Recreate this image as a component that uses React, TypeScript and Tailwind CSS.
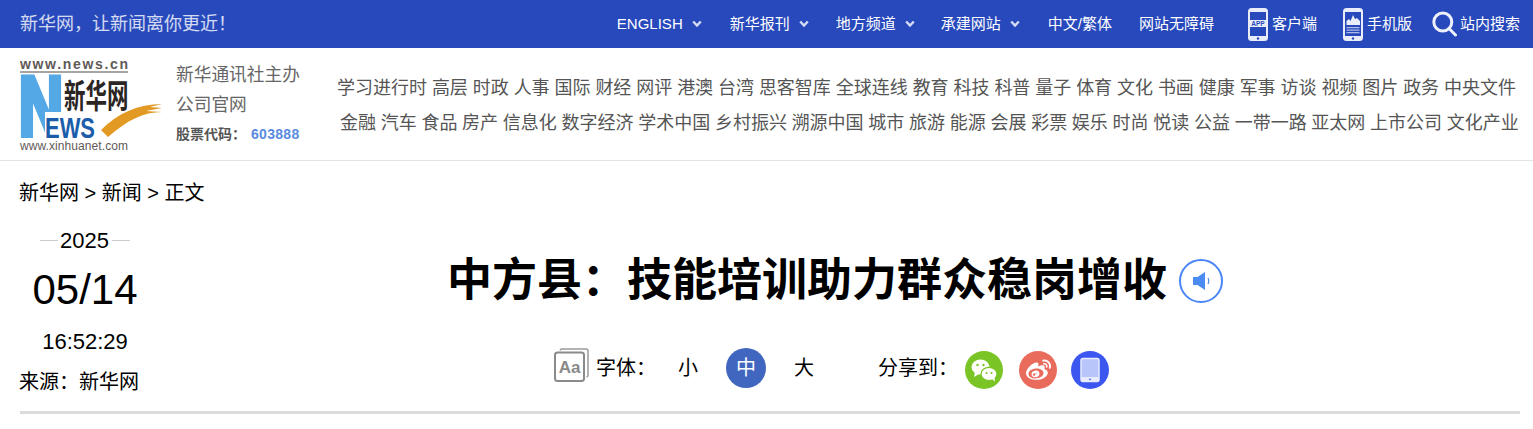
import { FaWeibo } from "react-icons/fa";

const font = "font-['Liberation_Sans','Noto_Sans_CJK_SC',sans-serif]";

const COLON = "\uFF1A";
const COMMA = "\uFF0C";
const BANG = "\uFF01";

const row1 = ["学习进行时", "高层", "时政", "人事", "国际", "财经", "网评", "港澳", "台湾", "思客智库", "全球连线", "教育", "科技", "科普", "量子", "体育", "文化", "书画", "健康", "军事", "访谈", "视频", "图片", "政务", "中央文件"];
const row2 = ["金融", "汽车", "食品", "房产", "信息化", "数字经济", "学术中国", "乡村振兴", "溯源中国", "城市", "旅游", "能源", "会展", "彩票", "娱乐", "时尚", "悦读", "公益", "一带一路", "亚太网", "上市公司", "文化产业"];

function Chevron() {
  return (
    <svg width="10" height="8" viewBox="0 0 10 8" className="ml-[9px]">
      <path d="M1.2 1.5 5 5.6l3.8-4.1" fill="none" stroke="#d5dcf4" strokeWidth="2.4" />
    </svg>
  );
}

function Phone({ children }: { children: React.ReactNode }) {
  return (
    <svg width="20" height="33" viewBox="0 0 20 33">
      <rect x="0" y="0" width="20" height="33" rx="3.5" fill="#e9edf9" />
      <rect x="2" y="4" width="16" height="24" fill="#2749bc" />
      <circle cx="10" cy="30.5" r="1.2" fill="#2749bc" />
      {children}
    </svg>
  );
}

function Logo() {
  return (
    <svg width="145" height="100" viewBox="0 0 145 100" className="shrink-0">
      <text x="2" y="15" fontSize="14" fontWeight="700" fill="#5f5a58" fontFamily="Liberation Sans" textLength="108" lengthAdjust="spacing">www.news.cn</text>
      <rect x="2" y="17" width="108" height="2" fill="#a8a4a2" />
      <text x="1" y="81" fontSize="84" fontWeight="700" fill="#55a8e6" stroke="#55a8e6" strokeWidth="6" fontFamily="Liberation Sans" textLength="44" lengthAdjust="spacingAndGlyphs">N</text>
      <rect x="27" y="58" width="20" height="27" fill="#ffffff" />
      <rect x="0" y="84" width="30" height="3" fill="#ffffff" />
      <text x="27" y="84" fontSize="30" fontWeight="700" fill="#1c5dab" fontFamily="Liberation Sans" textLength="50" lengthAdjust="spacingAndGlyphs">EWS</text>
      <g transform="translate(46,54) scale(1,1.55)">
        <text x="0" y="0" fontSize="21.5" fontWeight="700" fill="#2b2523" fontFamily="Noto Sans CJK SC">新华网</text>
      </g>
      <path d="M83 76C100 59 120 50 144 50L132 53 144 54 128 57 144 58C125 58 110 66 90 83Z" fill="#e29a24" />
      <text x="2" y="96" fontSize="12" fill="#5f5a58" fontFamily="Liberation Sans" textLength="108" lengthAdjust="spacing">www.xinhuanet.com</text>
    </svg>
  );
}

export default function App() {
  return (
    <div className={`${font} h-[429px] w-[1533px] overflow-hidden bg-white text-black`} lang="zh-CN">
      {/* top bar */}
      <div className="flex h-12 items-center justify-between bg-[#2749bc] pl-5 pr-[13px] text-[15px] text-white">
        <div className="text-[18px] text-white/80">新华网{COMMA}让新闻离你更近{BANG}</div>
        <div className="flex items-center">
          <div className="flex items-center">ENGLISH<Chevron /></div>
          <div className="ml-[28px] flex items-center">新华报刊<Chevron /></div>
          <div className="ml-[27px] flex items-center">地方频道<Chevron /></div>
          <div className="ml-[26px] flex items-center">承建网站<Chevron /></div>
          <div className="ml-[28px]">中文/繁体</div>
          <div className="ml-[27px]">网站无障碍</div>
          <div className="ml-[34px] flex items-center gap-1">
            <Phone>
              <rect x="2" y="12" width="16" height="7" fill="#e9edf9" />
              <text x="10" y="18" textAnchor="middle" fontSize="6.5" fontWeight="700" fill="#2749bc" fontFamily="Liberation Sans">APP</text>
            </Phone>
            客户端
          </div>
          <div className="ml-[26px] flex items-center gap-1">
            <Phone>
              <path d="M3.5 17V13l2.5-2 1.5 2 2.5-6 2 4 2-1 3 3v4z" fill="#e9edf9" />
              <path d="M3.5 19h13v1.2h-13zM3.5 21.5h13v1.2h-13zM3.5 24h13v1.2h-13z" fill="#aebbe8" />
            </Phone>
            手机版
          </div>
          <div className="ml-5 flex items-center gap-[3px]">
            <svg width="25" height="26" viewBox="0 0 25 26">
              <circle cx="10.8" cy="11" r="9" fill="none" stroke="#eef1fb" strokeWidth="3" />
              <path d="M17 17.5l6.5 6.5" stroke="#eef1fb" strokeWidth="3" strokeLinecap="round" />
            </svg>
            站内搜索
          </div>
        </div>
      </div>

      {/* logo and channels */}
      <div className="flex h-[113px] items-center border-b border-[#e4e4e4] pl-[18px]">
        <Logo />
        <div className="mb-1 ml-[13px] w-[161px] shrink-0 text-[#666]">
          <div className="text-[17.7px] leading-[30px]">新华通讯社主办</div>
          <div className="text-[17.7px] leading-[30px]">公司官网</div>
          <div className="mt-1 text-[14px] font-bold leading-5 text-[#555]">
            股票代码{COLON}<span className="ml-[5px] tracking-[0.3px] text-[#5b8be0]">603888</span>
          </div>
        </div>
        <div className="mt-[2px] flex w-[1182px] flex-col gap-[17px] text-[18px] leading-[18px] text-[#555]">
          <div className="flex justify-between pr-[3px]">
            {row1.map((t) => (
              <span key={t}>{t}</span>
            ))}
          </div>
          <div className="flex justify-between pl-[3px]">
            {row2.map((t) => (
              <span key={t}>{t}</span>
            ))}
          </div>
        </div>
      </div>

      <div className="pl-5 pr-[13px]">
        <div className="-ml-px flex h-[64px] items-start pt-[18px] text-[20px] leading-[28px]">新华网 &gt; 新闻 &gt; 正文</div>

        <div className="flex border-b-[3px] border-[#dbdbdb] pb-[14px]">
          {/* date column */}
          <div className="w-[130px] shrink-0">
            <div className="flex h-[31px] items-center justify-center text-[22px]">
              <span className="h-px w-[18px] bg-[#ccc]" />
              <span className="ml-[2px] mr-[3px]">2025</span>
              <span className="h-px w-[18px] bg-[#ccc]" />
            </div>
            <div className="mt-[4px] h-[60px] text-center text-[42px] leading-[60px]">05/14</div>
            <div className="mt-[7px] h-[30px] text-center text-[22px] leading-[30px]">16:52:29</div>
            <div className="-ml-px mt-[10px] h-[30px] text-[20px] leading-[30px]">来源{COLON}新华网</div>
          </div>

          {/* title column */}
          <div className="flex-1">
            <div className="mt-[26px] flex h-[60px] items-center justify-center">
              <h1 className="text-[45px] font-bold leading-[60px]">中方县{COLON}技能培训助力群众稳岗增收</h1>
              <div className="ml-[12px] flex h-11 w-11 items-center justify-center rounded-full border-2 border-[#4a86f7]">
                <svg width="17" height="18" viewBox="0 0 17 18" className="ml-px">
                  <path d="M0 5h4.5L12 0v18l-7.5-5H0z" fill="#4a8cf2" />
                  <path d="M15 6c1 2 1 4 0 6" fill="none" stroke="#4a8cf2" strokeWidth="1.2" />
                </svg>
              </div>
            </div>

            <div className="mr-[7px] mt-[37px] flex h-10 items-center justify-center text-[20px]">
              <svg width="35" height="34" viewBox="0 0 35 34" className="mb-[6px]">
                <path d="M6 2.5A2 2 0 0 1 8 1h24a2 2 0 0 1 2 2v24a2 2 0 0 1-1.5 2" fill="none" stroke="#9a9a9a" strokeWidth="1.5" />
                <rect x="1" y="4.5" width="29" height="28.5" rx="2.5" fill="#fff" stroke="#8a8a8a" strokeWidth="2" />
                <text x="15.5" y="25" textAnchor="middle" fontSize="17" fontWeight="700" fill="#8a8a8a" fontFamily="Liberation Sans">Aa</text>
              </svg>
              <span className="ml-[7px] w-[82px]">字体{COLON}</span>
              <span>小</span>
              <span className="ml-7 flex h-10 w-10 items-center justify-center rounded-full bg-[#4166c0] text-white">中</span>
              <span className="ml-7">大</span>
              <span className="ml-[64px]">分享到{COLON}</span>
              <svg width="38" height="38" viewBox="0 0 38 38" className="ml-[7px] mt-1">
                <circle cx="19" cy="19" r="19" fill="#7ac525" />
                <ellipse cx="15.5" cy="16" rx="9" ry="7.5" fill="#fff" />
                <path d="M10 21l-1 5 5-3z" fill="#fff" />
                <ellipse cx="24" cy="23" rx="8" ry="6.6" fill="#fff" stroke="#7ac525" strokeWidth="1.2" />
                <path d="M27 28l3 2.5-.5-4z" fill="#fff" />
                <circle cx="12.5" cy="14" r="1.2" fill="#7ac525" />
                <circle cx="18.5" cy="14" r="1.2" fill="#7ac525" />
                <circle cx="21.5" cy="22" r="1" fill="#7ac525" />
                <circle cx="26.5" cy="22" r="1" fill="#7ac525" />
              </svg>
              <span className="ml-[16px] mt-1 flex h-[38px] w-[38px] items-center justify-center rounded-full bg-[#e96b5c] text-white">
                <FaWeibo size={25} />
              </span>
              <svg width="38" height="38" viewBox="0 0 38 38" className="ml-[14px] mt-1">
                <circle cx="19" cy="19" r="19" fill="#3b57f0" />
                <rect x="10" y="7.5" width="18" height="23" rx="2" fill="#b7c5fa" stroke="#e6ebfe" strokeWidth="1.5" />
                <rect x="10" y="26" width="18" height="4.5" fill="#e6ebfe" />
                <circle cx="19" cy="28.3" r="0.9" fill="#3b57f0" />
              </svg>
            </div>
          </div>
        </div>
      </div>
    </div>
  );
}
